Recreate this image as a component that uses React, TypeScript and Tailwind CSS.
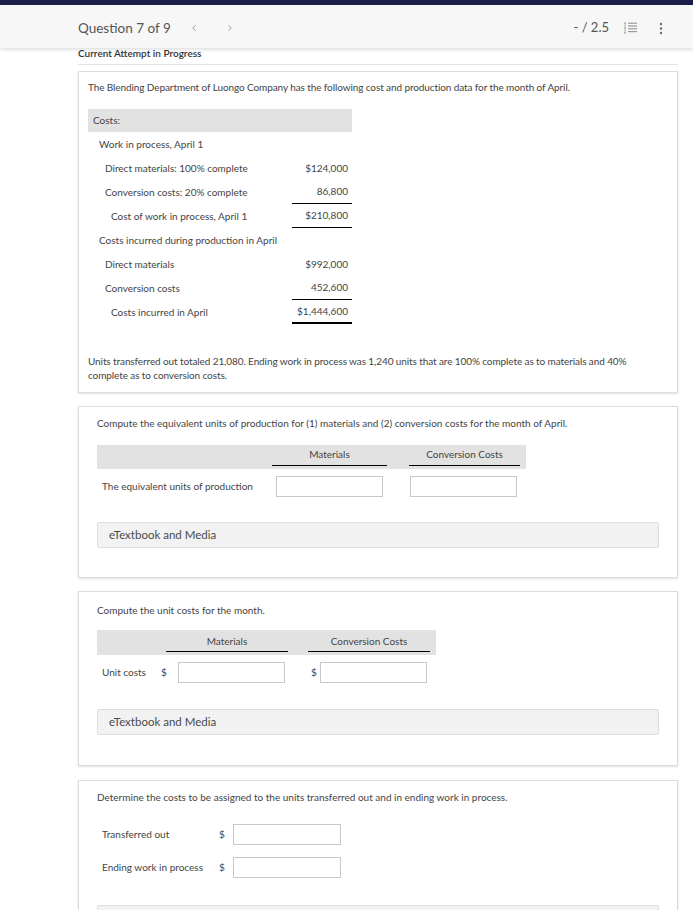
import { ChevronLeft, ChevronRight } from "lucide-react";

const font = { fontFamily: "Lato, 'Open Sans', sans-serif" };

const costRows = [
  { label: "Work in process, April 1", indent: "pl-[11px]", amount: "", line: "" },
  { label: "Direct materials: 100% complete", indent: "pl-[17px]", amount: "$124,000", line: "" },
  { label: "Conversion costs: 20% complete", indent: "pl-[17px]", amount: "86,800", line: "border-b border-black" },
  { label: "Cost of work in process, April 1", indent: "pl-[23px]", amount: "$210,800", line: "border-b border-black" },
  { label: "Costs incurred during production in April", indent: "pl-[11px]", amount: "", line: "" },
  { label: "Direct materials", indent: "pl-[17px]", amount: "$992,000", line: "" },
  { label: "Conversion costs", indent: "pl-[17px]", amount: "452,600", line: "border-b border-black" },
  { label: "Costs incurred in April", indent: "pl-[23px]", amount: "$1,444,600", line: "border-b-2 border-black" },
];

const Input = ({ w = "w-[107px]" }: { w?: string }) => (
  <div className={`${w} h-[21px] border border-[#c8c8c8] bg-white`} />
);

const Media = () => (
  <div className="h-[26px] border border-[#dedede] bg-[#f2f2f2] rounded-[2px] flex items-center pl-[11px] text-[11.5px] text-[#4a4a4a]">
    eTextbook and Media
  </div>
);

const Card = ({ children, className = "" }: { children: React.ReactNode; className?: string }) => (
  <div className={`border border-[#dcdcdc] bg-white shadow-[0_1px_2px_rgba(0,0,0,0.12)] ${className}`}>{children}</div>
);

export default function App() {
  return (
    <div className="h-[910px] w-[693px] bg-white text-[#444] overflow-hidden" style={font}>
      <div className="h-[5px] bg-[#1a1e48]" />
      <header className="h-[43px] bg-[#f7f7f7] shadow-[0_2px_3px_rgba(0,0,0,0.12)] flex items-center pl-[78px] pr-[30px] pt-[3px] relative z-10">
        <span className="text-[13.5px] text-[#555]">Question 7 of 9</span>
        <ChevronLeft className="ml-[18px] w-[10px] h-[10px] text-[#888]" strokeWidth={2} />
        <ChevronRight className="ml-[26px] w-[10px] h-[10px] text-[#888]" strokeWidth={2} />
        <span className="ml-auto text-[13px] text-[#555]">- / 2.5</span>
        <svg className="ml-[15px]" width="13" height="12" viewBox="0 0 13 12" fill="none">
          <g fill="#9a9a9a">
            <rect x="0" y="0.5" width="2" height="1.2" />
            <rect x="0" y="5.4" width="2" height="1.2" />
            <rect x="0" y="10.3" width="2" height="1.2" />
            <rect x="0.6" y="2.3" width="1" height="2.4" />
            <rect x="0.6" y="7.2" width="1" height="2.4" />
          </g>
          <g stroke="#9a9a9a" strokeWidth="1.2">
            <line x1="4" y1="1.2" x2="13" y2="1.2" />
            <line x1="4" y1="4" x2="13" y2="4" />
            <line x1="4" y1="6.8" x2="13" y2="6.8" />
            <line x1="4" y1="9.6" x2="13" y2="9.6" />
          </g>
        </svg>
        <svg className="ml-[22px]" width="4" height="13" viewBox="0 0 4 13">
          <g fill="#6b6b6b">
            <circle cx="2" cy="2" r="1.2" />
            <circle cx="2" cy="6.5" r="1.2" />
            <circle cx="2" cy="11" r="1.2" />
          </g>
        </svg>
      </header>

      <div className="ml-[78px] w-[600px]">
        <div className="h-[17px] border-b border-[#e4e4e4] text-[10px] font-semibold text-[#333] leading-[10px]">
          Current Attempt in Progress
        </div>

        <Card className="mt-[6px] px-[9px] pt-[8px] pb-[10px]">
          <p className="text-[10px] leading-[14px] tracking-[-0.1px]">
            The Blending Department of Luongo Company has the following cost and production data for the month of April.
          </p>
          <div className="mt-[15px] w-[264px] text-[10px]">
            <div className="h-[23px] bg-[#e2e2e2] flex items-center pl-[5px]">Costs:</div>
            {costRows.map((r) => (
              <div key={r.label} className="flex h-[24px]">
                <div className={`flex-1 flex items-center ${r.indent}`}>{r.label}</div>
                <div className={`w-[60px] flex items-center justify-end pr-[4px] ${r.line}`}>{r.amount}</div>
              </div>
            ))}
          </div>
          <p className="mt-[30px] text-[10px] leading-[14px] tracking-[-0.1px]">
            Units transferred out totaled 21,080. Ending work in process was 1,240 units that are 100% complete as to materials and 40% complete as to conversion costs.
          </p>
        </Card>

        <Card className="mt-[13px] px-[18px] pt-[9px] pb-[29px]">
          <p className="text-[10px] leading-[14px]">
            Compute the equivalent units of production for (1) materials and (2) conversion costs for the month of April.
          </p>
          <div className="mt-[15px] text-[10px]">
            <div className="w-[429px] h-[24px] bg-[#e2e2e2] flex items-end pb-[3px]">
              <div className="w-[175px]" />
              <div className="w-[115px] text-center border-b border-black pb-[3px]">Materials</div>
              <div className="ml-[22px] w-[111px] text-center border-b border-black pb-[3px]">Conversion Costs</div>
            </div>
            <div className="flex items-center mt-[7px]">
              <div className="w-[179px] pl-[5px]">The equivalent units of production</div>
              <Input />
              <div className="ml-[27px]">
                <Input />
              </div>
            </div>
          </div>
          <div className="mt-[25px]">
            <Media />
          </div>
        </Card>

        <Card className="mt-[13px] px-[18px] pt-[11px] pb-[30px]">
          <p className="text-[10px] leading-[14px]">Compute the unit costs for the month.</p>
          <div className="mt-[13px] text-[10px]">
            <div className="w-[339px] h-[25px] bg-[#e2e2e2] flex items-end pb-[3px]">
              <div className="w-[69px]" />
              <div className="w-[122px] text-center border-b border-black pb-[2px]">Materials</div>
              <div className="ml-[20px] w-[122px] text-center border-b border-black pb-[2px]">Conversion Costs</div>
            </div>
            <div className="flex items-center mt-[7px]">
              <div className="w-[64px] pl-[5px]">Unit costs</div>
              <div className="w-[17px]">$</div>
              <Input />
              <div className="ml-[26px] w-[9px]">$</div>
              <Input />
            </div>
          </div>
          <div className="mt-[26px]">
            <Media />
          </div>
        </Card>

        <Card className="mt-[14px] px-[18px] pt-[9px] pb-[26px]">
          <p className="text-[10px] leading-[14px]">
            Determine the costs to be assigned to the units transferred out and in ending work in process.
          </p>
          <div className="mt-[20px] text-[10px] flex flex-col gap-[12px]">
            <div className="flex items-center">
              <div className="w-[122px] pl-[5px]">Transferred out</div>
              <div className="w-[14px]">$</div>
              <Input w="w-[108px]" />
            </div>
            <div className="flex items-center">
              <div className="w-[122px] pl-[5px]">Ending work in process</div>
              <div className="w-[14px]">$</div>
              <Input w="w-[108px]" />
            </div>
          </div>
          <div className="mt-[27px]">
            <Media />
          </div>
        </Card>
      </div>
    </div>
  );
}
